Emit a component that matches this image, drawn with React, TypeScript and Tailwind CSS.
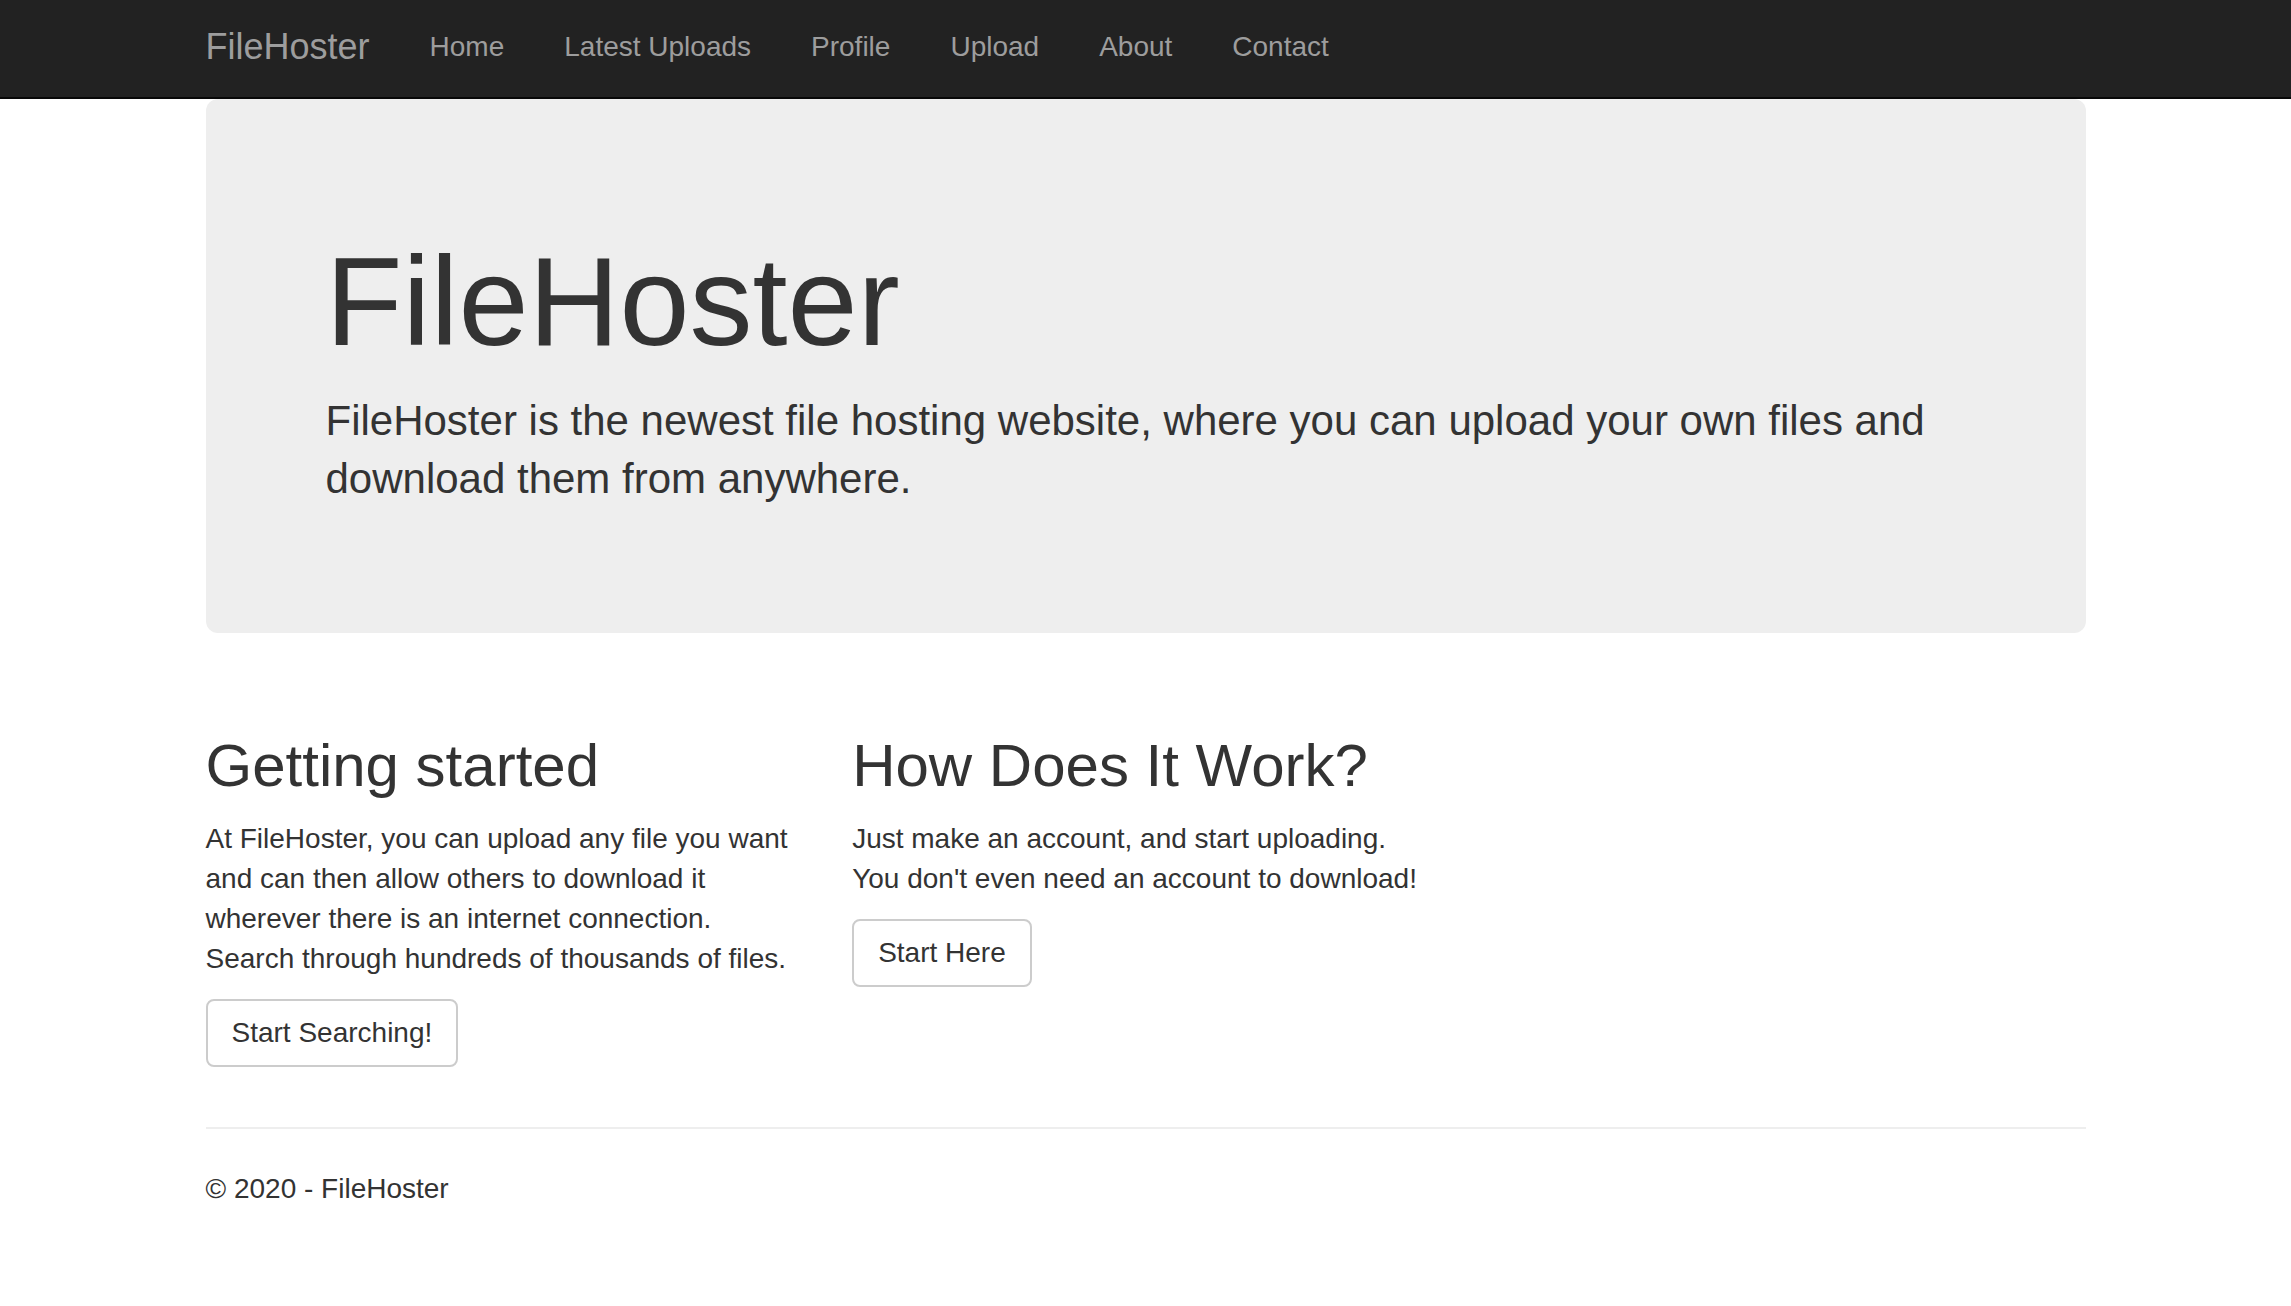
import React from 'react';

const navLinks = ['Home', 'Latest Uploads', 'Profile', 'Upload', 'About', 'Contact'];

const Navbar: React.FC = () => (
  <nav className="h-[99px] bg-[#222] border-b-2 border-[#080808]">
    <div className="w-[1940px] mx-auto flex items-start">
      <a className="pt-[27px] px-[30px] text-[36px] leading-[40px] text-[#9d9d9d]">FileHoster</a>
      <ul className="flex">
        {navLinks.map((link) => (
          <li key={link}>
            <a className="block pt-[27px] px-[30px] text-[28px] leading-[40px] text-[#9d9d9d]">{link}</a>
          </li>
        ))}
      </ul>
    </div>
  </nav>
);

const Button: React.FC<{ label: string }> = ({ label }) => (
  <a className="inline-block px-[24px] py-[12px] text-[28px] leading-[40px] text-[#333] bg-white border-2 border-[#ccc] rounded-[8px]">
    {label}
  </a>
);

export default function App() {
  return (
    <div className="min-h-screen bg-white text-[#333] font-['Liberation_Sans',Arial,sans-serif]">
      <Navbar />

      <div className="w-[1940px] mx-auto px-[30px]">
        <div className="bg-[#eee] rounded-[12px] px-[120px] pt-[134px] pb-[124px] mb-[60px]">
          <h1 className="text-[126px] leading-[1.1] font-normal">FileHoster</h1>
          <p className="mt-[20px] text-[42px] leading-[1.4]">
            FileHoster is the newest file hosting website, where you can upload your own files and download them
            from anywhere.
          </p>
        </div>

        <div className="-mx-[30px] grid grid-cols-3">
          <div className="px-[30px]">
            <h2 className="mt-[40px] mb-[20px] text-[60px] leading-[1.1] font-normal">Getting started</h2>
            <p className="mb-[20px] text-[28px] leading-[40px]">
              At FileHoster, you can upload any file you want and can then allow others to download it wherever
              there is an internet connection. Search through hundreds of thousands of files.
            </p>
            <p className="mb-[20px]">
              <Button label="Start Searching!" />
            </p>
          </div>
          <div className="px-[30px]">
            <h2 className="mt-[40px] mb-[20px] text-[60px] leading-[1.1] font-normal">How Does It Work?</h2>
            <p className="mb-[20px] text-[28px] leading-[40px]">
              Just make an account, and start uploading.
              <br />
              You don't even need an account to download!
            </p>
            <p className="mb-[20px]">
              <Button label="Start Here" />
            </p>
          </div>
          <div className="px-[30px]" />
        </div>

        <hr className="mt-[40px] mb-[40px] border-0 border-t-2 border-[#eee]" />
        <footer>
          <p className="mb-[20px] text-[28px] leading-[40px]">© 2020 - FileHoster</p>
        </footer>
      </div>
    </div>
  );
}
